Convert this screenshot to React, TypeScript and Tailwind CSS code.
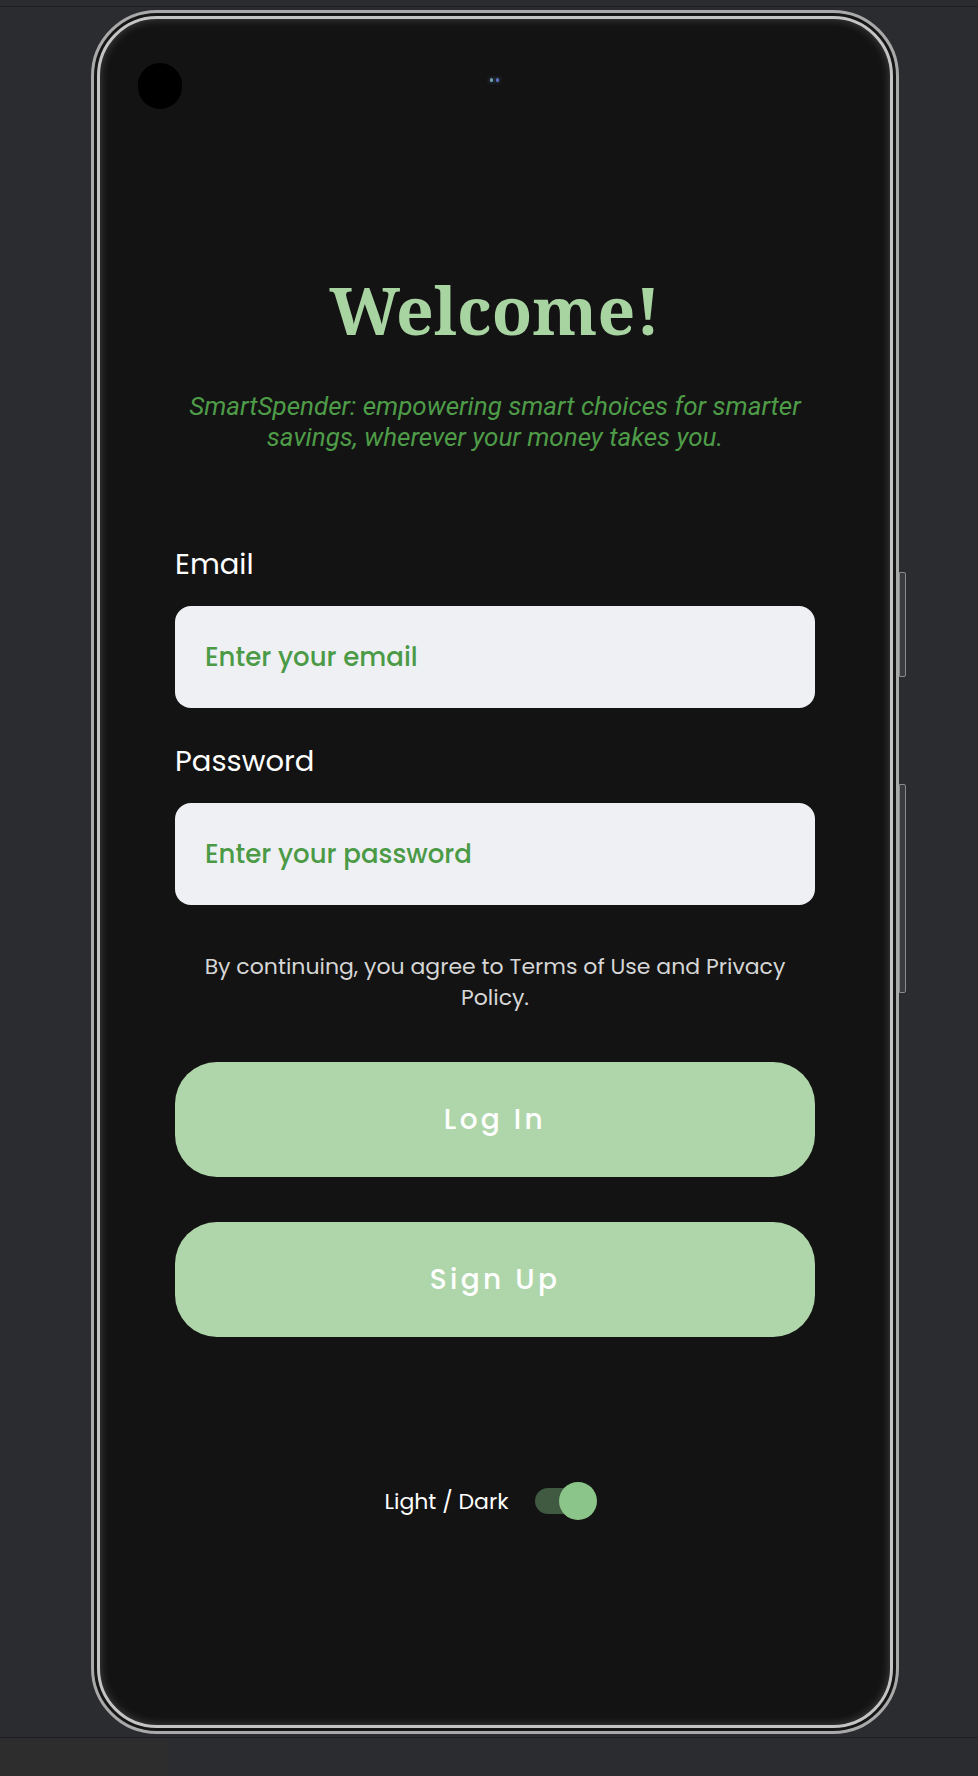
import { useState } from "react";

const sans = "font-['Poppins','Inter','Noto_Sans',sans-serif]";

function Field({ label, placeholder, type }: { label: string; placeholder: string; type: string }) {
  return (
    <div className="flex flex-col">
      <label className={`${sans} text-[29px] leading-[32px] text-white`}>{label}</label>
      <input
        type={type}
        placeholder={placeholder}
        className={`${sans} mt-[26px] h-[102px] w-full rounded-[16px] bg-[#eff0f4] px-[30px] text-[26px] font-medium text-[#4b9a46] outline-none placeholder:text-[#4b9a46]`}
      />
    </div>
  );
}

export default function App() {
  const [dark, setDark] = useState(true);

  return (
    <div className="relative h-[1776px] w-[978px] overflow-hidden bg-[#2b2c30]">
      <div className="h-[7px] border-b border-[#1f2023] bg-[#2b2c30]" />

      {/* phone */}
      <div className="relative ml-[91px] mt-[3px] h-[1724px] w-[808px]">
        {/* side buttons */}
        <div className="absolute right-[-7px] top-[562px] h-[105px] w-[7px] rounded-r-[2px] border border-[#8a8a8a] bg-[#3a3b3f]" />
        <div className="absolute right-[-7px] top-[774px] h-[209px] w-[7px] rounded-r-[2px] border border-[#8a8a8a] bg-[#3a3b3f]" />

        <div className="h-full w-full rounded-[66px] border-[3px] border-[#a9a9a9] bg-[#161616] p-[3px]">
          <div className="relative flex h-full w-full flex-col items-center rounded-[60px] border-[3px] border-[#c4c4c4] bg-[#131313] shadow-[inset_0_0_10px_rgba(255,255,255,0.22)]">
            {/* camera + sensor */}
            <div className="absolute left-[38px] top-[44px] h-[46px] w-[44px] rounded-full bg-black" />
            <div className="absolute left-[390px] top-[59px] flex gap-[3px]">
              <div className="h-[4px] w-[3px] rounded-full bg-[#6fa0b0] shadow-[0_0_4px_rgba(120,160,220,0.6)]" />
              <div className="h-[4px] w-[3px] rounded-full bg-[#5a6cc0] shadow-[0_0_4px_rgba(120,160,220,0.6)]" />
            </div>

            <div className="flex w-[640px] flex-col pt-[256px]">
              <h1 className="text-center font-['Noto_Serif','DejaVu_Serif',serif] text-[66px] font-bold leading-[68px] text-[#a8d4a1]">
                Welcome!
              </h1>
              <p className="mx-auto mt-[48px] w-[640px] text-center font-['Roboto',sans-serif] text-[26px] italic leading-[31px] text-[#4e9c48]">
                SmartSpender: empowering smart choices for smarter savings, wherever your money takes you.
              </p>

              <div className="mt-[95px]">
                <Field label="Email" placeholder="Enter your email" type="email" />
              </div>
              <div className="mt-[37px]">
                <Field label="Password" placeholder="Enter your password" type="password" />
              </div>

              <p className={`${sans} mt-[46px] w-full text-center text-[22px] leading-[31px] text-[#d6d6d6]`}>
                By continuing, you agree to Terms of Use and Privacy Policy.
              </p>

              <button className={`${sans} mt-[49px] h-[115px] w-full rounded-[42px] bg-[#afd6aa] text-[28px] font-medium tracking-[0.12em] text-white`}>
                Log In
              </button>
              <button className={`${sans} mt-[45px] h-[115px] w-full rounded-[42px] bg-[#afd6aa] text-[28px] font-medium tracking-[0.12em] text-white`}>
                Sign Up
              </button>

              <div className="mt-[146px] flex h-[36px] items-center justify-center gap-[26px] pr-[9px]">
                <span className={`${sans} text-[22px] text-white`}>Light / Dark</span>
                <button
                  onClick={() => setDark(!dark)}
                  className="relative h-[38px] w-[62px]"
                  aria-label="toggle theme"
                >
                  <span className="absolute left-0 top-[6px] h-[26px] w-[52px] rounded-full bg-[#3f5a40]" />
                  <span
                    className={`absolute top-0 h-[38px] w-[38px] rounded-full bg-[#8cc589] ${dark ? "left-[24px]" : "left-0"}`}
                  />
                </button>
              </div>
            </div>
          </div>
        </div>
      </div>

      <div className="absolute bottom-0 left-0 right-0 h-[39px] border-t border-[#1e1f22] bg-[#2b2c30]">
        <div className="h-full w-[167px] bg-[#2d2d2d]" />
      </div>
    </div>
  );
}
